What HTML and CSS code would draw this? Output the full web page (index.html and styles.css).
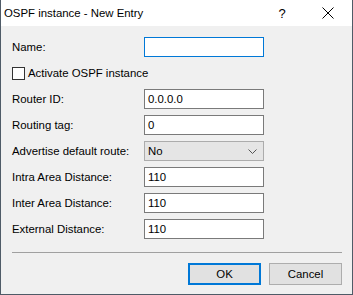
FILE: index.html
```html
<!DOCTYPE html>
<html lang="en">
<head>
  <meta charset="UTF-8">
  <title>OSPF instance - New Entry</title>
  <link rel="stylesheet" href="styles.css">
</head>
<body>
  <div class="dialog">
    <div class="titlebar">
      <span class="title">OSPF instance - New Entry</span>
      <span class="help">?</span>
      <span class="close">
        <svg width="12" height="12" viewBox="0 0 12 12"><path d="M0.5 0.5 L11.5 11.5 M11.5 0.5 L0.5 11.5" stroke="#000" stroke-width="1"/></svg>
      </span>
    </div>

    <div class="content">
      <div class="form">
        <label>Name:</label>
        <div class="field focus"></div>

        <div class="check-row">
          <span class="checkbox"></span>
          <span>Activate OSPF instance</span>
        </div>

        <label>Router ID:</label>
        <div class="field">0.0.0.0</div>

        <label>Routing tag:</label>
        <div class="field">0</div>

        <label>Advertise default route:</label>
        <div class="field select">
          <span>No</span>
          <svg width="9" height="5" viewBox="0 0 9 5"><path d="M0.5 0.5 L4.5 4.5 L8.5 0.5" stroke="#555" fill="none"/></svg>
        </div>

        <label>Intra Area Distance:</label>
        <div class="field">110</div>

        <label>Inter Area Distance:</label>
        <div class="field">110</div>

        <label>External Distance:</label>
        <div class="field">110</div>
      </div>

      <div class="separator"></div>

      <div class="buttons">
        <button class="default">OK</button>
        <button>Cancel</button>
      </div>
    </div>
  </div>
</body>
</html>
```

FILE: styles.css
```css
* {
  margin: 0;
  padding: 0;
  box-sizing: border-box;
}

body {
  font-family: 'Liberation Sans', Arial, sans-serif;
  font-size: 11.4px;
  color: #000;
  background: #f0f0f0;
}

.dialog {
  width: 353px;
  height: 295px;
  border: 1px solid #4f5b67;
  border-top: none;
  background: #f0f0f0;
  display: flex;
  flex-direction: column;
}

.titlebar {
  height: 26px;
  background: #fff;
  display: flex;
  align-items: center;
  padding-left: 3px;
}

.title {
  flex: 1;
  font-size: 11.4px;
}

.help {
  width: 46px;
  text-align: center;
  font-size: 13px;
}

.close {
  width: 46px;
  display: flex;
  justify-content: center;
  margin-right: 1px;
}

.content {
  padding: 11px 10px 0 11px;
  flex: 1;
}

.form {
  display: grid;
  grid-template-columns: 132px 120px;
  grid-auto-rows: 20px;
  row-gap: 6px;
  align-items: center;
}

.form label {
  line-height: 20px;
}

.field {
  height: 20px;
  border: 1px solid #7a7a7a;
  background: #fff;
  padding: 0 3px;
  line-height: 18px;
}

.field.focus {
  border-color: #0078d7;
}

.field.select {
  background: #e5e5e5;
  border-color: #acacac;
  display: flex;
  align-items: center;
  justify-content: space-between;
  padding-right: 6px;
}

.check-row {
  grid-column: 1 / 3;
  display: flex;
  align-items: center;
  gap: 3px;
}

.checkbox {
  width: 13px;
  height: 13px;
  border: 1px solid #333;
  background: #fff;
}

.separator {
  margin-top: 13px;
  height: 1px;
  background: #a0a0a0;
  width: 330px;
}

.buttons {
  display: flex;
  justify-content: flex-end;
  gap: 8px;
  margin-top: 10px;
  padding-right: 0;
}

button {
  width: 73px;
  height: 22px;
  font-family: inherit;
  font-size: 11.4px;
  background: #e1e1e1;
  border: 1px solid #adadad;
  color: #000;
}

button.default {
  border: 2px solid #0078d7;
}
```
